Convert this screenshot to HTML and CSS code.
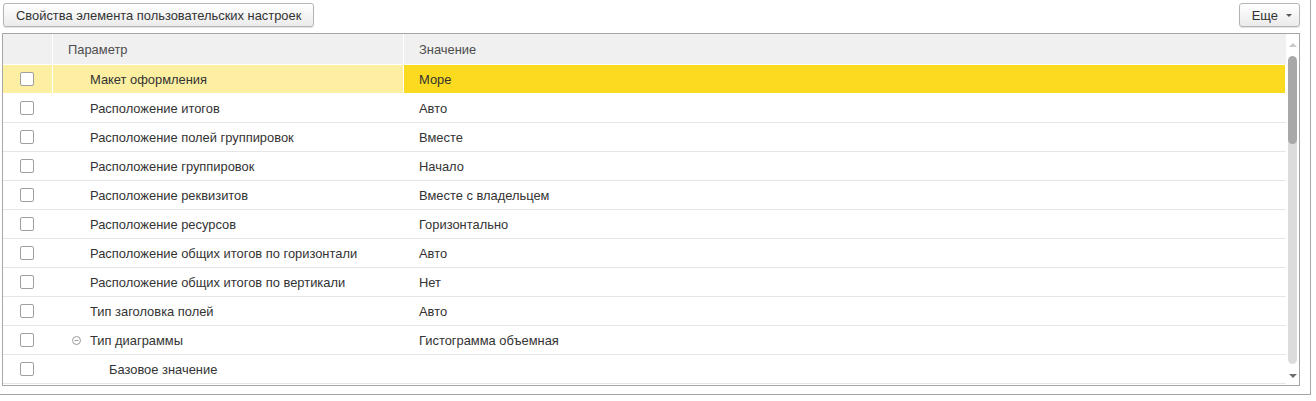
FILE: index.html
```html
<!DOCTYPE html>
<html lang="ru">
    <head>
        <meta charset="UTF-8" />
        <title>Свойства элемента пользовательских настроек</title>
        <link rel="stylesheet" href="styles.css">
    </head>
    <body>
        <div class="form">
            <div class="toolbar">
                <button class="btn">Свойства элемента пользовательских настроек</button>
                <button class="btn btn-more">Еще <span class="caret"></span></button>
            </div>
            <div class="grid">
                <div class="grid-body">
                    <div class="head">
                        <div class="c-check"></div>
                        <div class="c-param">Параметр</div>
                        <div class="c-value">Значение</div>
                    </div>
                    <div class="row selected">
                        <div class="c-check"><span class="box"></span></div>
                        <div class="c-param lvl1">Макет оформления</div>
                        <div class="c-value">Море</div>
                    </div>
                    <div class="row">
                        <div class="c-check"><span class="box"></span></div>
                        <div class="c-param lvl1">Расположение итогов</div>
                        <div class="c-value">Авто</div>
                    </div>
                    <div class="row">
                        <div class="c-check"><span class="box"></span></div>
                        <div class="c-param lvl1">Расположение полей группировок</div>
                        <div class="c-value">Вместе</div>
                    </div>
                    <div class="row">
                        <div class="c-check"><span class="box"></span></div>
                        <div class="c-param lvl1">Расположение группировок</div>
                        <div class="c-value">Начало</div>
                    </div>
                    <div class="row">
                        <div class="c-check"><span class="box"></span></div>
                        <div class="c-param lvl1">Расположение реквизитов</div>
                        <div class="c-value">Вместе с владельцем</div>
                    </div>
                    <div class="row">
                        <div class="c-check"><span class="box"></span></div>
                        <div class="c-param lvl1">Расположение ресурсов</div>
                        <div class="c-value">Горизонтально</div>
                    </div>
                    <div class="row">
                        <div class="c-check"><span class="box"></span></div>
                        <div class="c-param lvl1">Расположение общих итогов по горизонтали</div>
                        <div class="c-value">Авто</div>
                    </div>
                    <div class="row">
                        <div class="c-check"><span class="box"></span></div>
                        <div class="c-param lvl1">Расположение общих итогов по вертикали</div>
                        <div class="c-value">Нет</div>
                    </div>
                    <div class="row">
                        <div class="c-check"><span class="box"></span></div>
                        <div class="c-param lvl1">Тип заголовка полей</div>
                        <div class="c-value">Авто</div>
                    </div>
                    <div class="row">
                        <div class="c-check"><span class="box"></span></div>
                        <div class="c-param lvl1 has-tree">
                            <svg class="toggle" width="9" height="9" viewBox="0 0 9 9">
                                <circle cx="4.5" cy="4.5" r="4" fill="none" stroke="#9a9a9a" />
                                <line x1="2.5" y1="4.5" x2="6.5" y2="4.5" stroke="#9a9a9a" />
                            </svg>
                            Тип диаграммы
                        </div>
                        <div class="c-value">Гистограмма объемная</div>
                    </div>
                    <div class="row">
                        <div class="c-check"><span class="box"></span></div>
                        <div class="c-param lvl2">Базовое значение</div>
                        <div class="c-value"></div>
                    </div>
                </div>
                <div class="scrollbar">
                    <span class="arrow up"></span>
                    <div class="track"><div class="thumb"></div></div>
                    <span class="arrow down"></span>
                </div>
            </div>
        </div>
    </body>
</html>
```

FILE: styles.css
```css
* {
    margin: 0;
    padding: 0;
    box-sizing: border-box;
}
body {
    font-family: "Liberation Sans", Arial, sans-serif;
    font-size: 12.9px;
    color: #333333;
    background: #ffffff;
}
.form {
    width: 1311px;
    height: 395px;
    border-right: 1px solid #a6a6a6;
    border-bottom: 1px solid #a6a6a6;
    padding: 3px 10px 0 2px;
}

/* toolbar */
.toolbar {
    display: flex;
    justify-content: space-between;
    height: 24px;
    padding-left: 1px;
}
.btn {
    height: 24px;
    padding: 0 12px;
    border: 1px solid #b5b5b5;
    border-radius: 3px;
    background: linear-gradient(#ffffff, #ebebeb);
    box-shadow: 0 1px 1px rgba(0, 0, 0, 0.12);
    font-family: inherit;
    font-size: 12.9px;
    color: #333333;
}
.btn-more {
    padding: 0 7px 0 12px;
    display: flex;
    align-items: center;
    gap: 8px;
}
.caret {
    width: 0;
    height: 0;
    border-left: 3px solid transparent;
    border-right: 3px solid transparent;
    border-top: 3px solid #555555;
}

/* grid */
.grid {
    margin-top: 6px;
    height: 353px;
    border: 1px solid #a6a6a6;
    display: flex;
}
.grid-body {
    flex: 1;
    overflow: hidden;
}
.head,
.row {
    display: flex;
}
.head {
    height: 31px;
    background: #f0f0f0;
    border-bottom: 1px solid #ffffff;
    color: #4d4d4d;
}
.row {
    height: 29px;
    border-bottom: 1px solid #e6e6e6;
}
.c-check {
    width: 50px;
    display: flex;
    align-items: center;
    justify-content: center;
    padding-right: 2px;
}
.c-param {
    width: 351px;
    display: flex;
    align-items: center;
    padding-left: 15px;
}
.c-value {
    flex: 1;
    display: flex;
    align-items: center;
    padding-left: 15px;
}
.head .c-check,
.head .c-param {
    border-right: 1px solid #ffffff;
}
.lvl1 {
    padding-left: 37px;
}
.lvl2 {
    padding-left: 56px;
}
.has-tree {
    padding-left: 19px;
}
.toggle {
    margin-right: 9px;
}
.box {
    width: 14px;
    height: 14px;
    border: 1px solid #a0a0a0;
    border-radius: 2px;
    background: #ffffff;
}
.row.selected {
    border-bottom-color: #ffffff;
}
.selected .c-check,
.selected .c-param {
    background: #fcefa2;
    border-right: 1px solid #ffffff;
}
.selected .c-value {
    background: #fbda1f;
    margin-right: 1px;
}

/* scrollbar */
.scrollbar {
    width: 13px;
    display: flex;
    flex-direction: column;
    align-items: center;
    padding: 9px 0 7px;
}
.arrow {
    width: 0;
    height: 0;
    border-left: 4px solid transparent;
    border-right: 4px solid transparent;
}
.arrow.up {
    border-bottom: 4px solid #c8c8c8;
}
.arrow.down {
    border-top: 4px solid #6e6e6e;
}
.track {
    flex: 1;
    width: 9px;
    margin: 9px 0 10px;
    border-radius: 5px;
    background: #dcdcdc;
    overflow: hidden;
}
.thumb {
    height: 88px;
    border-radius: 5px;
    background: #a8a8a8;
}
```
